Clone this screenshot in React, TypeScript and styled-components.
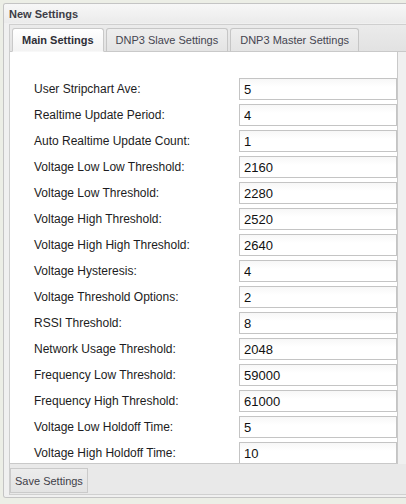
import React from "react";
import styled, { createGlobalStyle } from "styled-components";

const Global = createGlobalStyle`
  html, body { margin: 0; padding: 0; overflow: hidden; }
  body {
    background: #eceee6;
    font-family: "Liberation Sans", Arial, sans-serif;
    width: 406px;
    height: 504px;
  }
`;

const Dialog = styled.div`
  margin: 3px 0 0 3px;
  width: 402px;
  border: 1px solid #c4c4c4;
  border-right: none;
  border-radius: 3px 0 0 3px;
  background: #f0f0f0;
  overflow: hidden;
`;

const TitleBar = styled.div`
  height: 19px;
  display: flex;
  align-items: center;
  padding-left: 5px;
  background: linear-gradient(#f7f7f7, #ebebeb);
  font-size: 11px;
  font-weight: bold;
  color: #3d3d46;
`;

const TabsWrap = styled.div`
  margin: 1px 0 0 5px;
  border-left: 1px solid #cdcdcd;
  border-top: 1px solid #cfcfcf;
`;

const TabHeader = styled.div`
  height: 27px;
  padding: 3px 0 0 2px;
  box-sizing: border-box;
  display: flex;
  align-items: flex-end;
  gap: 2px;
  background: linear-gradient(#ebebeb, #e2e2e2);
  border-bottom: 1px solid #c9c9c9;
`;

const Tab = styled.div<{ $active?: boolean }>`
  height: 24px;
  box-sizing: border-box;
  padding: 0 9px;
  margin-bottom: -1px;
  display: flex;
  align-items: center;
  border: 1px solid ${(p) => (p.$active ? "#c9c9c9" : "#c6c6c6")};
  border-bottom: ${(p) => (p.$active ? "1px solid #f8f8f8" : "1px solid #c9c9c9")};
  border-radius: 3px 3px 0 0;
  background: ${(p) =>
    p.$active ? "linear-gradient(#ffffff, #f3f3f3)" : "linear-gradient(#eeeeee, #e4e4e4)"};
  font-size: 11px;
  font-weight: ${(p) => (p.$active ? "bold" : "normal")};
  color: ${(p) => (p.$active ? "#2e2e36" : "#454550")};
  white-space: nowrap;
`;

const PanelBox = styled.div`
  width: 387px;
  height: 411px;
  background: #ffffff;
  border-right: 1px solid #c9c9c9;
  border-bottom: 1px solid #c9c9c9;
  overflow: hidden;
`;

const PanelInner = styled.div`
  padding: 24px 0 0 24px;
  display: flex;
  flex-direction: column;
`;

const Row = styled.div`
  height: 26px;
  display: flex;
  align-items: center;
`;

const Label = styled.label`
  width: 205px;
  flex: none;
  font-size: 12px;
  color: #1c1c22;
  white-space: nowrap;
`;

const Input = styled.input`
  height: 22px;
  box-sizing: border-box;
  width: 158px;
  flex: none;
  margin: 0;
  border: 1px solid #c4c4c4;
  background: linear-gradient(#f7f7f7, #ffffff 40%);
  padding: 0 0 0 4px;
  font-family: "Liberation Sans", Arial, sans-serif;
  font-size: 13px;
  color: #111;
  outline: none;
`;

const ButtonBar = styled.div`
  height: 31px;
  box-sizing: border-box;
  padding: 4px 0 0 0;
  background: #e9e9e9;
  border-bottom: 1px solid #d0d0d0;
  display: flex;
  align-items: flex-start;
`;

const Button = styled.button`
  height: 25px;
  box-sizing: border-box;
  padding: 0 4px;
  margin: 0;
  border: 1px solid #cacaca;
  background: linear-gradient(#ececec, #e3e3e3);
  font-family: "Liberation Sans", Arial, sans-serif;
  font-size: 11px;
  color: #3e3e48;
  border-radius: 0;
  white-space: nowrap;
`;

const Footer = styled.div`
  height: 2px;
  background: #f0f0f0;
`;

const rows: [string, string][] = [
  ["User Stripchart Ave:", "5"],
  ["Realtime Update Period:", "4"],
  ["Auto Realtime Update Count:", "1"],
  ["Voltage Low Low Threshold:", "2160"],
  ["Voltage Low Threshold:", "2280"],
  ["Voltage High Threshold:", "2520"],
  ["Voltage High High Threshold:", "2640"],
  ["Voltage Hysteresis:", "4"],
  ["Voltage Threshold Options:", "2"],
  ["RSSI Threshold:", "8"],
  ["Network Usage Threshold:", "2048"],
  ["Frequency Low Threshold:", "59000"],
  ["Frequency High Threshold:", "61000"],
  ["Voltage Low Holdoff Time:", "5"],
  ["Voltage High Holdoff Time:", "10"],
];

export default function App() {
  return (
    <>
      <Global />
      <Dialog>
        <TitleBar>New Settings</TitleBar>
        <TabsWrap>
          <TabHeader>
            <Tab $active>Main Settings</Tab>
            <Tab>DNP3 Slave Settings</Tab>
            <Tab>DNP3 Master Settings</Tab>
          </TabHeader>
          <PanelBox>
            <PanelInner>
              {rows.map(([l, v]) => (
                <Row key={l}>
                  <Label>{l}</Label>
                  <Input defaultValue={v} />
                </Row>
              ))}
            </PanelInner>
          </PanelBox>
          <ButtonBar>
            <Button>Save Settings</Button>
          </ButtonBar>
        </TabsWrap>
        <Footer />
      </Dialog>
    </>
  );
}
